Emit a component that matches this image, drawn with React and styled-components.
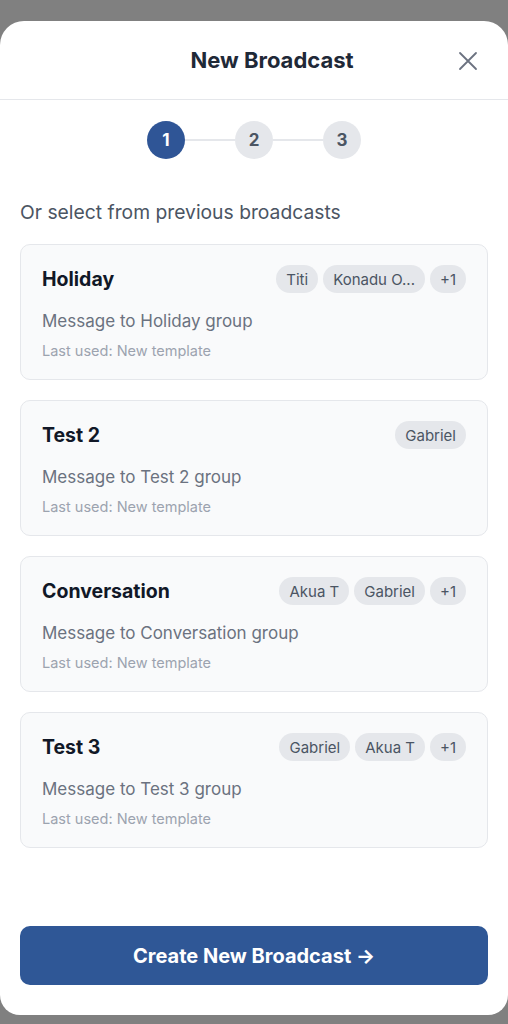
import styled, { createGlobalStyle } from "styled-components";

const Global = createGlobalStyle`
  html, body {
    margin: 0;
    background: #808080;
    font-family: Inter, "Noto Sans", sans-serif;
  }
  #root {
    padding-top: 21px;
  }
`;

const Sheet = styled.div`
  background: #fff;
  height: 994px;
  border-radius: 24px 24px 20px 20px;
  display: flex;
  flex-direction: column;
  box-sizing: border-box;
  padding-bottom: 30px;
`;

const Header = styled.header`
  height: 79px;
  box-sizing: border-box;
  border-bottom: 1px solid #e5e7eb;
  display: flex;
  align-items: center;
  justify-content: center;
  position: relative;
  padding: 0 0 1px 36px;
`;

const Title = styled.h1`
  margin: 0;
  font-size: 22px;
  font-weight: 700;
  color: #1f2937;
`;

const Close = styled.button`
  position: absolute;
  right: 28px;
  top: 28px;
  width: 24px;
  height: 24px;
  padding: 0;
  border: 0;
  background: none;
  color: #6b7280;
  display: flex;
  align-items: center;
  justify-content: center;
`;

const Steps = styled.div`
  display: flex;
  align-items: center;
  justify-content: center;
  margin-top: 21px;
`;

const Step = styled.div`
  width: 38px;
  height: 38px;
  border-radius: 50%;
  display: flex;
  align-items: center;
  justify-content: center;
  font-size: 17px;
  font-weight: 700;
  background: ${(p) => (p.$active ? "#2f5596" : "#e5e7eb")};
  color: ${(p) => (p.$active ? "#fff" : "#4b5563")};
`;

const Line = styled.div`
  width: 50px;
  height: 2px;
  background: #e5e7eb;
`;

const Body = styled.div`
  padding: 0 20px;
`;

const Label = styled.p`
  margin: 41px 0 20px;
  font-size: 19.3px;
  line-height: 24px;
  color: #4b5563;
`;

const List = styled.div`
  display: flex;
  flex-direction: column;
  gap: 20px;
`;

const Card = styled.div`
  background: #f9fafb;
  border: 1px solid #e5e7eb;
  border-radius: 10px;
  height: 136px;
  box-sizing: border-box;
  padding: 20px 21px 0 21px;
`;

const Top = styled.div`
  display: flex;
  align-items: center;
  justify-content: space-between;
  height: 28px;
`;

const Name = styled.h2`
  margin: 0;
  font-size: 19.5px;
  font-weight: 700;
  color: #111827;
`;

const Chips = styled.div`
  display: flex;
  gap: 5px;
`;

const Chip = styled.span`
  height: 28px;
  padding: 0 10px;
  border-radius: 14px;
  background: #e5e7eb;
  color: #4b5563;
  font-size: 15px;
  display: flex;
  align-items: center;
`;

const Message = styled.p`
  margin: 16px 0 0;
  font-size: 17px;
  line-height: 24px;
  color: #6b7280;
`;

const Used = styled.p`
  margin: 8px 0 0;
  font-size: 14.5px;
  line-height: 20px;
  color: #9ca3af;
`;

const Footer = styled.div`
  margin-top: auto;
  padding: 0 20px;
`;

const CreateButton = styled.button`
  width: 100%;
  height: 59px;
  border: 0;
  border-radius: 10px;
  background: #2f5796;
  color: #fff;
  font-family: inherit;
  font-size: 20px;
  font-weight: 700;
`;

const broadcasts = [
  { name: "Holiday", chips: ["Titi", "Konadu O...", "+1"] },
  { name: "Test 2", chips: ["Gabriel"] },
  { name: "Conversation", chips: ["Akua T", "Gabriel", "+1"] },
  { name: "Test 3", chips: ["Gabriel", "Akua T", "+1"] },
];

export default function App() {
  return (
    <>
      <Global />
      <Sheet>
        <Header>
          <Title>New Broadcast</Title>
          <Close aria-label="Close">
            <svg width="20" height="20" viewBox="0 0 20 20" fill="none" stroke="currentColor" strokeWidth="1.8" strokeLinecap="round">
              <path d="M2 2L18 18M18 2L2 18" />
            </svg>
          </Close>
        </Header>
        <Steps>
          <Step $active>1</Step>
          <Line />
          <Step>2</Step>
          <Line />
          <Step>3</Step>
        </Steps>
        <Body>
          <Label>Or select from previous broadcasts</Label>
          <List>
            {broadcasts.map((b) => (
              <Card key={b.name}>
                <Top>
                  <Name>{b.name}</Name>
                  <Chips>
                    {b.chips.map((c) => (
                      <Chip key={c}>{c}</Chip>
                    ))}
                  </Chips>
                </Top>
                <Message>Message to {b.name} group</Message>
                <Used>Last used: New template</Used>
              </Card>
            ))}
          </List>
        </Body>
        <Footer>
          <CreateButton>Create New Broadcast →</CreateButton>
        </Footer>
      </Sheet>
    </>
  );
}
